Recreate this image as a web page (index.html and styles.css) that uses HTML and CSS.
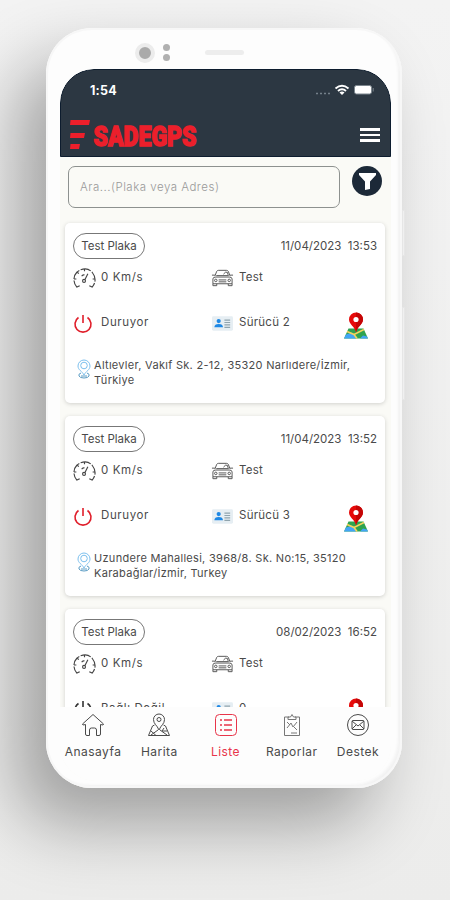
FILE: index.html
```
<!DOCTYPE html>
<html lang="tr">
<head>
    <meta charset="UTF-8">
    <meta name="viewport" content="width=device-width, initial-scale=1.0">
    <title>SADEGPS</title>
    <link rel="stylesheet" href="styles.css">
</head>
<body>
    <!-- shared icons -->
    <svg class="sprite" width="0" height="0">
        <symbol id="gauge" viewBox="0 0 24 22">
            <g fill="none" stroke="#444" stroke-width="1.2">
                <path d="M7 19l-3 1.500C0 16 0 9 4 5s12-5 16 0 4 11 0 15.500L17 19" stroke-dasharray="11 1.500"/>
                <path d="M12 1.500v2.500M4.500 5l1.500 1.500M1 12h2.500M20.500 12H23M12.500 12.500l3-6M9 9q2-2 3-1"/>
                <circle cx="11.500" cy="14" r="1.500"/>
            </g>
        </symbol>
        <symbol id="car" viewBox="0 0 24 18">
            <g fill="none" stroke="#555">
                <path d="M4 7l2-5q.5-1 2-1h8q1.500 0 2 1l2 5M1 6h3M20 6h3M5.500 6.500h13M2 10q0-2 3-2h14q3 0 3 2v5H2z"/>
                <path d="M2 15v2h4v-2M18 15v2h4v-2M8 11h8M8 13h8"/>
                <circle cx="5" cy="11.500" r="1.300"/>
                <circle cx="19" cy="11.500" r="1.300"/>
                <path d="M13 5l2-2h2l1 3"/>
            </g>
        </symbol>
        <symbol id="power" viewBox="0 0 20 20">
            <path d="M5.500 3.500a8 8 0 1 0 9 0M10 1v8" fill="none" stroke="currentColor" stroke-width="1.600"/>
        </symbol>
        <symbol id="idcard" viewBox="0 0 22 15">
            <rect width="22" height="15" rx="1.500" fill="#e6eef3"/>
            <circle cx="7" cy="5" r="2.200" fill="#1e88e5"/>
            <path d="M2.500 11.500q0-3.500 4.500-3.500t4.500 3.500z" fill="#1e88e5"/>
            <path d="M13 4h6M13 6.500h6M13 9h6M13 11.500h6" stroke="#90a4ae" stroke-width="1.200"/>
        </symbol>
        <symbol id="map" viewBox="0 0 24 26">
            <path d="M4.500 16h15L24 26H0z" fill="#2fa34f"/>
            <path d="M2 22l6-2 5 6H0zM19 23l4 1 1 2h-8z" fill="#42a5f5"/>
            <path d="M3 19l7 3 3 4M10 22l10-5" fill="none" stroke="#f4d35e" stroke-width="1.600"/>
            <path d="M12 20C11 14 5 12 5 7a7 7 0 0 1 14 0c0 5-6 7-7 13z" fill="#e60a0a"/>
            <path d="M12 0a7 7 0 0 1 7 7c0 5-6 7-7 13z" fill="#c40606"/>
            <circle cx="12" cy="7" r="2.600" fill="#fff"/>
        </symbol>
        <symbol id="pin" viewBox="0 0 14 20">
            <g fill="none" stroke="#7cc0ee">
                <path d="M7 16C5 12 1 11 1 7a6 6 0 0 1 12 0c0 4-4 5-6 9z"/>
                <circle cx="7" cy="6.500" r="3.300"/>
                <path d="M4 14q-3 1-2 3t5 2 5-2-2-3M4 17h6" stroke="#5a9cc4"/>
            </g>
        </symbol>
    </svg>

    <div class="phone">
        <div class="camera"></div>
        <div class="sensors"><i></i><i></i></div>
        <div class="speaker"></div>
        <div class="side-btn power-btn"></div>
        <div class="side-btn volume-btn"></div>

        <div class="screen">
            <header>
                <div class="status">
                    <span class="clock">1:54</span>
                    <svg width="58" height="12" viewBox="0 0 58 12">
                        <path d="M0 9.500h14" stroke="#74808a" stroke-width="1.500" stroke-dasharray="2 2"/>
                        <g fill="none" stroke="#fff" stroke-width="1.900">
                            <path d="M19.500 4.500q6.500-5.500 13 0M22 7q4-3.500 8 0"/>
                        </g>
                        <path d="M23.500 8.500q2.500-2 5 0L26 11z" fill="#fff"/>
                        <rect x="38.500" y="1.500" width="17" height="8.500" rx="2" fill="#fff" stroke="#7b858d"/>
                        <path d="M57.200 4v3.500" stroke="#7b858d"/>
                    </svg>
                </div>
                <div class="brand">
                    <svg class="brand-logo" width="134" height="32" viewBox="0 0 134 32">
                        <path d="M.5 1H20l-1 5H0zM.5 14H15l-1 5H0zM.5 25H10l-1 5H0z" fill="#ec1f2b"/>
                        <text class="logo" x="23.500" y="27" textLength="103" lengthAdjust="spacingAndGlyphs">SADEGPS</text>
                    </svg>
                    <div class="menu"><i></i><i></i><i></i></div>
                </div>
            </header>

            <div class="search">
                <div class="search-box">Ara...(Plaka veya Adres)</div>
                <div class="filter">
                    <svg width="17" height="17" viewBox="0 0 17 17"><path d="M0 0h17v2l-6 6.500V16l-5 1V8.500L0 2z" fill="#fff"/></svg>
                </div>
            </div>

            <main>
                <div class="card">
                    <div class="top"><span class="plate">Test Plaka</span><span class="date">11/04/2023&nbsp; 13:53</span></div>
                    <div class="row">
                        <svg class="gauge"><use href="#gauge"/></svg><span class="speed">0 Km/s</span>
                        <svg class="car"><use href="#car"/></svg><span>Test</span>
                    </div>
                    <div class="row second">
                        <svg class="power"><use href="#power"/></svg><span class="state">Duruyor</span>
                        <svg class="idcard"><use href="#idcard"/></svg><span class="driver">Sürücü 2</span>
                        <svg class="map"><use href="#map"/></svg>
                    </div>
                    <div class="address">
                        <svg class="pin"><use href="#pin"/></svg>
                        <p>Altıevler, Vakıf Sk. 2-12, 35320 Narlıdere/İzmir,<br>Türkiye</p>
                    </div>
                </div>

                <div class="card">
                    <div class="top"><span class="plate">Test Plaka</span><span class="date">11/04/2023&nbsp; 13:52</span></div>
                    <div class="row">
                        <svg class="gauge"><use href="#gauge"/></svg><span class="speed">0 Km/s</span>
                        <svg class="car"><use href="#car"/></svg><span>Test</span>
                    </div>
                    <div class="row second">
                        <svg class="power"><use href="#power"/></svg><span class="state">Duruyor</span>
                        <svg class="idcard"><use href="#idcard"/></svg><span class="driver">Sürücü 3</span>
                        <svg class="map"><use href="#map"/></svg>
                    </div>
                    <div class="address">
                        <svg class="pin"><use href="#pin"/></svg>
                        <p>Uzundere Mahallesi, 3968/8. Sk. No:15, 35120<br>Karabağlar/İzmir, Turkey</p>
                    </div>
                </div>

                <div class="card">
                    <div class="top"><span class="plate">Test Plaka</span><span class="date">08/02/2023&nbsp; 16:52</span></div>
                    <div class="row">
                        <svg class="gauge"><use href="#gauge"/></svg><span class="speed">0 Km/s</span>
                        <svg class="car"><use href="#car"/></svg><span>Test</span>
                    </div>
                    <div class="row second">
                        <svg class="power off"><use href="#power"/></svg><span class="state">Bağlı Değil</span>
                        <svg class="idcard"><use href="#idcard"/></svg><span class="driver">0</span>
                        <svg class="map"><use href="#map"/></svg>
                    </div>
                </div>
            </main>

            <nav>
                <a>
                    <svg width="24" height="24" viewBox="0 0 24 24"><path d="M4.500 11.500L2 12 1.500 11 12 1.500 22.500 11l-.5 1-2.500-.5V21q0 1.500-1.500 1.500h-2.500V17q0-2-2-2h-3q-2 0-2 2v5.500H6Q4.500 22.500 4.500 21z"/></svg>
                    <span>Anasayfa</span>
                </a>
                <a>
                    <svg width="24" height="24" viewBox="0 0 24 24"><path d="M12 17C10 12 6.500 11 6.500 6.500a5.500 5.500 0 0 1 11 0c0 4.500-3.500 5.500-5.500 10.500zM7.500 12L5.500 13 1.500 22.500h21L18.500 13l-2-1M4 18l5 4.500M4 22l7-5M13 17l7 5M17 15l-2 3 5 0"/><circle cx="12" cy="6.500" r="2"/></svg>
                    <span>Harita</span>
                </a>
                <a class="active">
                    <svg width="24" height="24" viewBox="0 0 24 24"><rect x="1.500" y="1.500" width="21" height="21" rx="4"/><path d="M10 7h8M10 12h8M10 17h8M6 7h2M6 12h2M6 17h2" stroke-width="1.700"/></svg>
                    <span>Liste</span>
                </a>
                <a class="reports">
                    <svg width="24" height="24" viewBox="0 0 24 24"><path d="M9 4H4.500v18.500h15V4H15M8 6.500V4h2.500L12 1.500 13.500 4H16v2.500zM7 15l4-5 2 4 4-5M7 9l3 3M14 14l3 3M11 20h6"/></svg>
                    <span>Raporlar</span>
                </a>
                <a>
                    <svg width="24" height="24" viewBox="0 0 24 24"><circle cx="12" cy="12" r="10.500"/><rect x="6" y="7.500" width="12" height="9" rx="1"/><path d="M6 8l6 5 6-5M6 16l4-4M18 16l-4-4"/></svg>
                    <span>Destek</span>
                </a>
            </nav>
        </div>
    </div>
</body>
</html>
```
FILE: styles.css
```
* {
    box-sizing: border-box;
}

body {
    margin: 0;
    height: 900px;
    overflow: hidden;
    background: linear-gradient(180deg, #f3f3f3, #ececeb);
    font-family: Inter, "Noto Sans", sans-serif;
    font-size: 11px;
    color: #4a4a4a;
}

.sprite {
    position: absolute;
}

/* phone body */
.phone {
    position: relative;
    width: 356px;
    height: 760px;
    margin: 28px 0 0 46px;
    padding: 41px 11px 0 14px;
    border-radius: 46px;
    background: #fdfdfd;
    box-shadow: inset 0 0 0 2px #f7f7f7, inset -4px -3px 3px #f2f2f2, -30px 36px 70px rgba(0, 0, 0, 0.33);
}

.camera {
    position: absolute;
    left: 89px;
    top: 15px;
    width: 20px;
    height: 20px;
    border: 4.5px solid #ececec;
    border-radius: 50%;
    background: #aaa;
}

.sensors {
    position: absolute;
    left: 117px;
    top: 16px;
}

.sensors i {
    display: block;
    width: 7px;
    height: 7px;
    margin-bottom: 3px;
    border-radius: 50%;
    background: #b0b0b0;
}

.speaker {
    position: absolute;
    left: 159px;
    top: 22px;
    width: 39px;
    height: 5px;
    border-radius: 3px;
    background: #ededed;
}

.side-btn {
    position: absolute;
    left: 356px;
    width: 3px;
    border: 1px solid #e6e6e6;
    background: #f0f0f0;
}

.power-btn {
    top: 182px;
    height: 46px;
}

.volume-btn {
    top: 279px;
    height: 93px;
}

.screen {
    display: flex;
    flex-direction: column;
    height: 712px;
    overflow: hidden;
    border-radius: 34px 34px 36px 36px;
    background: #fafaf6;
}

/* header */
header {
    flex: none;
    height: 88px;
    padding: 13px 10px 0 9px;
    border: 1px solid #0d1c2e;
    border-radius: 34px 34px 0 0;
    background: #2c3742;
}

.status {
    display: flex;
    justify-content: space-between;
    align-items: center;
    height: 14px;
    padding: 0 6px 0 20px;
}

.clock {
    font-size: 12.5px;
    font-weight: 700;
    letter-spacing: 0.2px;
    color: #fff;
}

.brand {
    display: flex;
    justify-content: space-between;
    align-items: center;
    margin-top: 22px;
}

.brand-logo {
    overflow: visible;
}

.logo {
    font-family: Roboto, sans-serif;
    font-size: 28px;
    font-weight: 900;
    fill: #ec1f2b;
    stroke: #ec1f2b;
    stroke-width: 1.4px;
}

.menu {
    width: 20px;
}

.menu i {
    display: block;
    height: 2.5px;
    margin: 3px 0;
    background: #fff;
}

/* search */
.search {
    display: flex;
    flex: none;
    justify-content: space-between;
    height: 66px;
    padding: 9px 9px 0 8px;
}

.search-box {
    width: 272px;
    height: 42px;
    padding-left: 11px;
    border: 1px solid #8d918f;
    border-radius: 7px;
    font-size: 11.5px;
    font-weight: 300;
    letter-spacing: 0.5px;
    line-height: 41px;
    color: #999;
}

.filter {
    display: flex;
    justify-content: center;
    align-items: center;
    width: 30px;
    height: 30px;
    border-radius: 50%;
    background: #1c2938;
}

/* vehicle cards */
main {
    flex: 1;
    min-height: 0;
    overflow: hidden;
    margin-top: -4px;
    padding: 4px 6px 0 5px;
}

.card {
    height: 180px;
    margin-bottom: 13px;
    padding: 10px 8px;
    border-radius: 5px;
    background: #fff;
    box-shadow: 0 1px 4px rgba(0, 0, 0, 0.17);
}

.top {
    display: flex;
    justify-content: space-between;
    align-items: center;
    height: 26px;
}

.plate {
    width: 72px;
    height: 26px;
    border: 1px solid #777;
    border-radius: 13px;
    font-size: 11.5px;
    line-height: 24px;
    text-align: center;
}

.date {
    font-size: 11.5px;
    white-space: pre;
}

.row {
    display: grid;
    grid-template-columns: 28px 110px 28px 100px 1fr;
    align-items: center;
    height: 38px;
}

.row span {
    margin-top: -3px;
    font-size: 11.5px;
    letter-spacing: 0.25px;
}

.row .speed {
    letter-spacing: 0.6px;
}

.row .state {
    letter-spacing: 0.6px;
}

.row.second {
    height: 53px;
}

.gauge {
    width: 23px;
    height: 22px;
}

.car {
    width: 23px;
    height: 18px;
}

.power {
    width: 20px;
    height: 20px;
    color: #e01f2b;
}

.power.off {
    color: #333;
}

.idcard {
    width: 21px;
    height: 15px;
    margin-left: 1px;
}

.map {
    width: 24px;
    height: 27px;
    margin: 4px 0 0 5px;
}

.address {
    display: flex;
    gap: 3px;
    padding-left: 4px;
}

.pin {
    width: 14px;
    height: 20px;
    margin-top: 9px;
}

.address p {
    margin: 8px 0 0;
    letter-spacing: 0.29px;
    line-height: 14.5px;
    white-space: nowrap;
}

/* bottom menu */
nav {
    display: flex;
    flex: none;
    height: 74px;
    padding-top: 6px;
    background: #fdfdfd;
}

nav a {
    display: flex;
    flex: 1 0 0;
    flex-direction: column;
    align-items: center;
    font-size: 12px;
    letter-spacing: 0.45px;
}

nav svg {
    margin-bottom: 7px;
    fill: none;
    stroke: currentColor;
    stroke-width: 1;
}

nav .active {
    color: #e8354a;
}

nav .reports svg {
    stroke: #777;
}
```
